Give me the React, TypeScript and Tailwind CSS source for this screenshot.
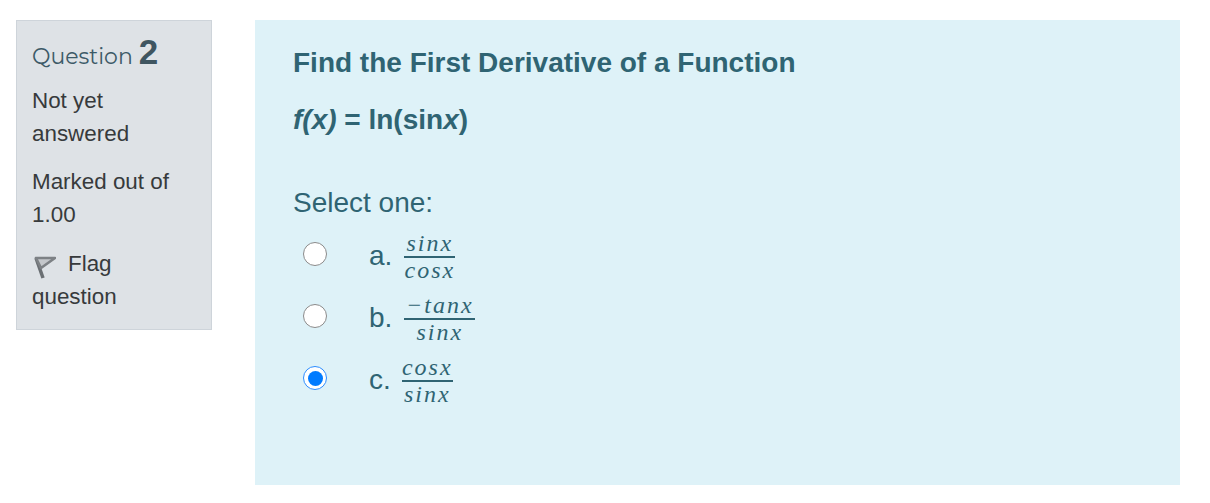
import React from 'react';

const FlagIcon = () => (
  <svg width="24" height="24" viewBox="0 0 24 24" fill="none" className="inline-block align-[-8px] mr-[12px] blur-[0.6px]">
    <path d="M4 3 L11 23" stroke="#6a6f73" strokeWidth="3.5" />
    <path d="M4 3 L23 3 L9 13 Z" stroke="#7d8185" strokeWidth="2.6" fill="#c4c7cb" strokeLinejoin="round" />
  </svg>
);

const Fraction = ({ top, bottom, wide }: { top: React.ReactNode; bottom: string; wide?: boolean }) => (
  <span className={`inline-flex flex-col items-center ${wide ? 'w-[71px]' : 'w-[51px]'} font-['Liberation_Serif',serif] italic text-[24px] leading-[24px]`}>
    <span className="w-full text-center border-b-2 border-[#2f6473] h-[27px] tracking-[2px]">{top}</span>
    <span className="w-full text-center h-[26px] tracking-[2px]">{bottom}</span>
  </span>
);

const Answer = ({ letter, top, bottom, wide, checked }: { letter: string; top: React.ReactNode; bottom: string; wide?: boolean; checked?: boolean }) => (
  <div className="flex items-center h-[62px]">
    <span className={`w-6 h-6 rounded-full ml-[10px] mb-[6px] flex items-center justify-center bg-white border ${checked ? 'border-[#2b8cff] border-[1.5px]' : 'border-[#8a8a8a]'}`}>
      {checked && <span className="w-[15px] h-[15px] rounded-full bg-[#007bff]" />}
    </span>
    <span className={`ml-[42px] ${checked ? 'mr-[11px]' : 'mr-[12px]'} text-[28px] leading-[37px] mb-[4px]`}>{letter}</span>
    <Fraction top={top} bottom={bottom} wide={wide} />
  </div>
);

export default function App() {
  return (
    <div className="w-[1210px] h-[503px] bg-white flex items-start pt-5 pl-4 font-['Liberation_Sans',sans-serif] overflow-hidden">
      <aside className="w-[196px] h-[310px] shrink-0 bg-[#dee2e6] border border-[#ced4da] px-[15px] pt-[15px] text-[#373a3c] text-[22.4px] leading-[32.5px]">
        <h3 className="h-[49px] flex items-baseline text-[#3d5a68] font-['Montserrat','Inter',sans-serif] text-[22px]">
          Question<span className="ml-[6px] text-[35px] font-bold font-['Liberation_Sans',sans-serif] text-[#3f5560]">2</span>
        </h3>
        <p>Not yet answered</p>
        <p className="mt-4">Marked out of 1.00</p>
        <p className="mt-[17px]">
          <FlagIcon />Flag question
        </p>
      </aside>
      <main className="ml-[43px] w-[925px] h-[465px] bg-[#def2f8] pl-[38px] pt-[24px] text-[#2f6473]">
        <h2 className="text-[28px] leading-[37px] font-bold">Find the First Derivative of a Function</h2>
        <p className="mt-[20px] text-[28px] leading-[37px] font-bold">
          <em>f(x)</em> = ln(sin<em>x</em>)
        </p>
        <p className="mt-[46px] text-[28px] leading-[37px]">Select one:</p>
        <div className="mt-[5px]">
          <Answer letter="a." top="sinx" bottom="cosx" />
          <Answer letter="b." top="−tanx" bottom="sinx" wide />
          <Answer letter="c." top="cosx" bottom="sinx" checked />
        </div>
      </main>
    </div>
  );
}
